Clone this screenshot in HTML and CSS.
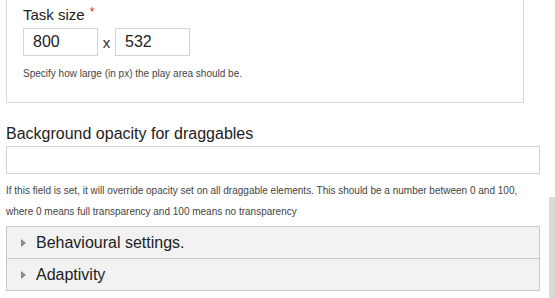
FILE: index.html
```html
<!DOCTYPE html>
<html>
<head>
<meta charset="utf-8">
<link rel="stylesheet" href="styles.css">
</head>
<body>
<div class="page">
  <div class="group">
    <div class="label">Task size <span class="req">*</span></div>
    <div class="size-row">
      <div class="input small">800</div>
      <span class="times">x</span>
      <div class="input small">532</div>
    </div>
    <div class="desc">Specify how large (in px) the play area should be.</div>
  </div>

  <div class="field">
    <div class="label big">Background opacity for draggables</div>
    <div class="input wide"></div>
    <div class="help">If this field is set, it will override opacity set on all draggable elements. This should be a number between 0 and 100, where 0 means full transparency and 100 means no transparency</div>
  </div>

  <div class="accordion">
    <div class="acc-item"><span class="tri"></span>Behavioural settings.</div>
    <div class="acc-item"><span class="tri"></span>Adaptivity</div>
  </div>
</div>
<div class="scrollthumb"></div>
</body>
</html>
```

FILE: styles.css
```css
html, body {
  margin: 0;
  padding: 0;
  background: #fff;
  font-family: "Liberation Sans", Arial, sans-serif;
  color: #222;
}
.page {
  padding: 0 15px 0 6px;
}
.group {
  border: 1px solid #d6d6d6;
  border-top: none;
  width: 500px;
  padding: 6px 0 0 16px;
  height: 96px;
}
.label {
  font-size: 15px;
  line-height: 18px;
  color: #222;
}
.req {
  color: #e2231a;
  font-size: 12px;
  vertical-align: top;
  line-height: 12px;
  margin-left: 1px;
}
.size-row {
  display: flex;
  align-items: center;
  margin-top: 4px;
}
.input {
  box-sizing: border-box;
  border: 1px solid #d3d3d3;
  background: #fff;
  height: 28px;
  font-size: 16px;
  line-height: 26px;
  padding-left: 9px;
  color: #222;
}
.small {
  width: 75px;
}
.times {
  font-size: 15px;
  width: 17px;
  text-align: center;
  color: #333;
}
.desc {
  font-size: 10px;
  color: #444;
  margin-top: 12px;
}
.field {
  margin-top: 21px;
}
.big {
  font-size: 16px;
  line-height: 20px;
}
.wide {
  width: 534px;
  margin-top: 2px;
}
.help {
  font-size: 10px;
  line-height: 21px;
  color: #444;
  margin-top: 6px;
  width: 540px;
}
.accordion {
  margin-top: 4px;
  width: 532px;
  border: 1px solid #c9c9c9;
  background: #f2f2f2;
}
.acc-item {
  height: 31px;
  display: flex;
  align-items: center;
  font-size: 16px;
  color: #222;
  padding-left: 14px;
}
.acc-item + .acc-item {
  border-top: 1px solid #c9c9c9;
}
.tri {
  width: 0;
  height: 0;
  border-left: 5px solid #8a8a8a;
  border-top: 4px solid transparent;
  border-bottom: 4px solid transparent;
  margin-right: 10px;
}
.scrollthumb {
  position: absolute;
  right: 0;
  top: 197px;
  width: 6px;
  height: 101px;
  background: #d9d9d9;
}
```
